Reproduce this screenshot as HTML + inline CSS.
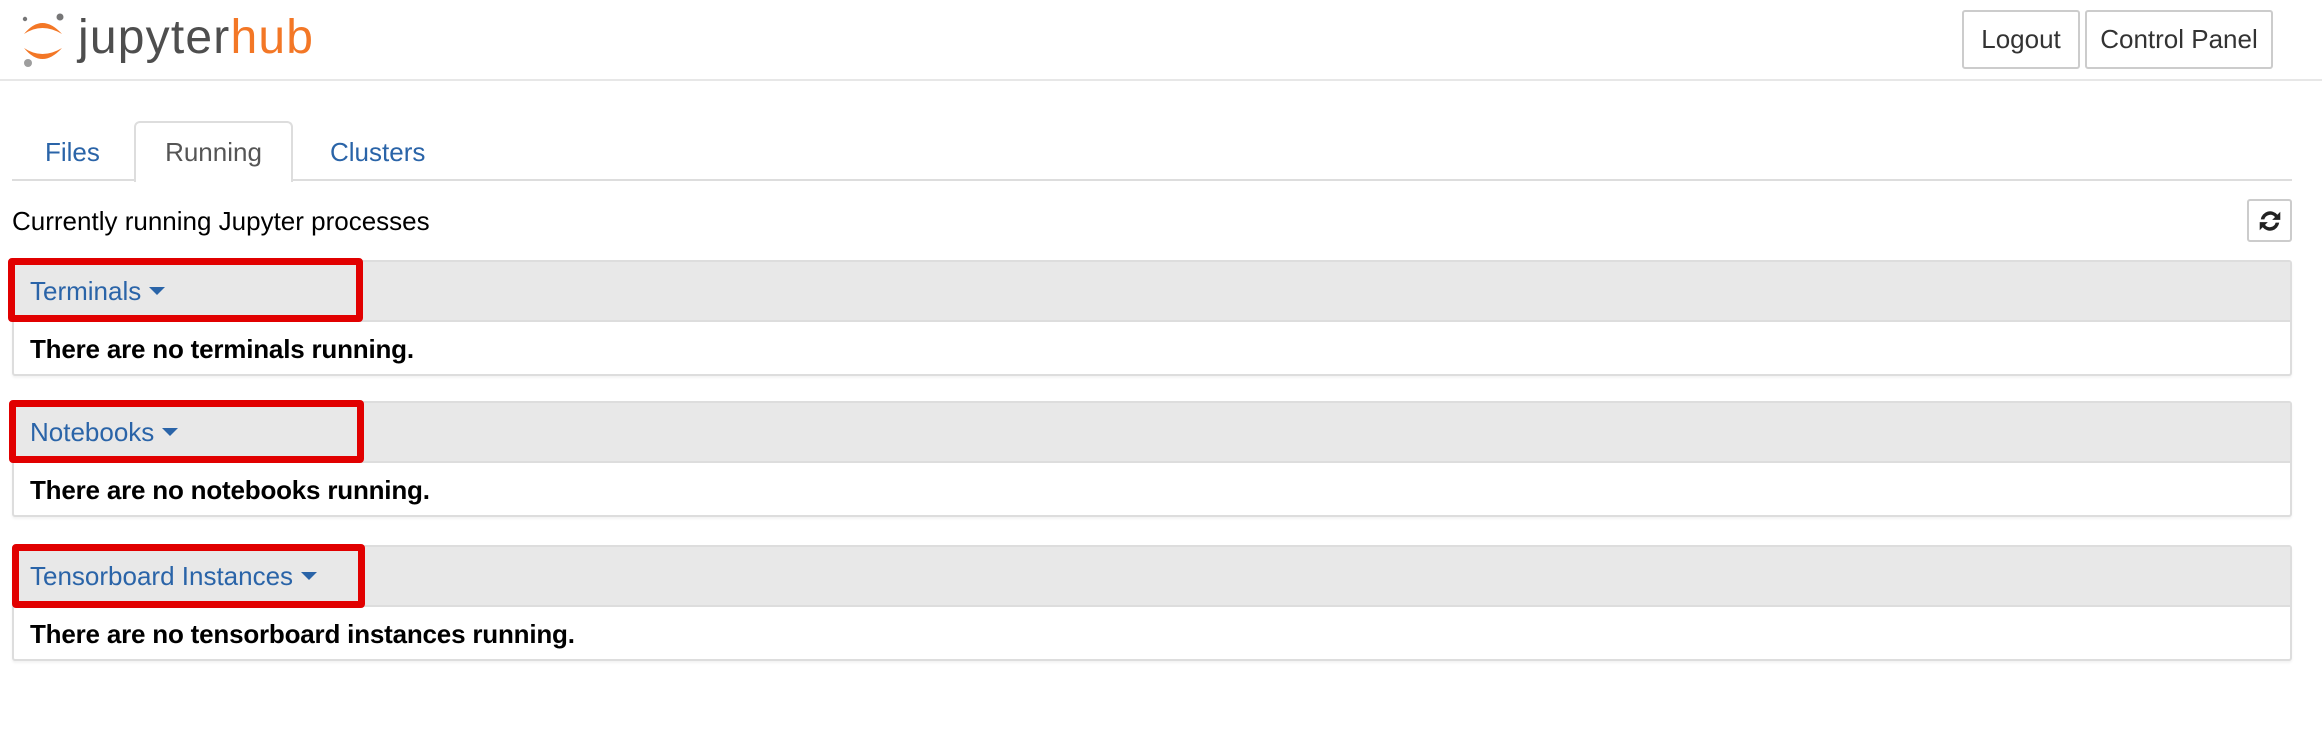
<!DOCTYPE html>
<html><head><meta charset="utf-8"><style>
*{box-sizing:border-box;margin:0;padding:0}
body{width:2322px;height:744px;background:#fff;font-family:"Liberation Sans",Arial,sans-serif;font-size:26px;color:#000;position:relative;overflow:hidden}
.abs{position:absolute}
.hline{position:absolute;left:0;width:2322px;top:79px;height:2px;background:#e7e7e7}
.btn{position:absolute;border:2px solid #ccc;border-radius:3px;background:#fff;color:#333;display:flex;align-items:center;justify-content:center;font-size:26px}
.tabline{position:absolute;left:12px;width:2280px;top:179px;height:2px;background:#ddd}
.tab{position:absolute;top:134px;color:#2a64a8;font-size:26px;line-height:36px}
.run{position:absolute;left:134px;top:121px;width:159px;height:61px;border:2px solid #ddd;border-bottom:none;border-radius:6px 6px 0 0;background:#fff;color:#555;display:flex;align-items:center;justify-content:center}
.panel{position:absolute;left:12px;width:2280px;border:2px solid #ddd;border-radius:3px;background:#fff;box-shadow:0 2px 2px rgba(0,0,0,.05)}
.ph{height:60px;background:#e8e8e8;border-bottom:2px solid #ddd;padding-left:16px;display:flex;align-items:center;color:#2a64a8}
.pb{height:52px;padding-left:16px;padding-top:2px;display:flex;align-items:center;font-weight:bold;letter-spacing:-0.2px}
.caret{display:inline-block;width:0;height:0;border-left:8px solid transparent;border-right:8px solid transparent;border-top:8px solid #2a64a8;margin-left:8px;vertical-align:middle}
.red{position:absolute;border:7px solid #e10000;border-radius:4px}
</style></head><body>
<svg class="abs" style="left:20px;top:10px" width="48" height="58" viewBox="0 0 48 58">
<path d="M4 24 Q22 2 42 24 Q22 12 4 24Z" fill="#f37726"/>
<path d="M4 38 Q22 60 42 38 Q22 50 4 38Z" fill="#f37726"/>
<circle cx="40" cy="7" r="3.5" fill="#767677"/>
<circle cx="5" cy="9" r="2.2" fill="#767677"/>
<circle cx="8" cy="53" r="4" fill="#9e9e9e"/>
</svg>
<div class="abs" style="left:78px;top:8px;font-size:48px;line-height:60px;letter-spacing:1.2px"><span style="color:#4e4e4e">jupyter</span><span style="color:#f37726">hub</span></div>
<div class="btn" style="left:1962px;top:10px;width:118px;height:59px">Logout</div>
<div class="btn" style="left:2085px;top:10px;width:188px;height:59px">Control Panel</div>
<div class="hline"></div>
<div class="tabline"></div>
<div class="tab" style="left:45px">Files</div>
<div class="run">Running</div>
<div class="tab" style="left:330px">Clusters</div>
<div class="abs" style="left:12px;top:206px;line-height:30px">Currently running Jupyter processes</div>
<div class="btn" style="left:2247px;top:199px;width:45px;height:43px;padding:0">
<svg width="26" height="26" viewBox="0 0 24 24"><path d="M3.5 10.5 A8.7 8.7 0 0 1 18.8 6.2 L21.5 3.5 V11 H14 L16.6 8.4 A5.6 5.6 0 0 0 6.8 10.5 Z" fill="#222"/><path d="M20.5 13.5 A8.7 8.7 0 0 1 5.2 17.8 L2.5 20.5 V13 H10 L7.4 15.6 A5.6 5.6 0 0 0 17.2 13.5 Z" fill="#222"/></svg></div>
<div class="panel" style="top:260px"><div class="ph">Terminals<span class="caret"></span></div><div class="pb">There are no terminals running.</div></div>
<div class="panel" style="top:401px"><div class="ph">Notebooks<span class="caret"></span></div><div class="pb">There are no notebooks running.</div></div>
<div class="panel" style="top:545px"><div class="ph">Tensorboard Instances<span class="caret"></span></div><div class="pb">There are no tensorboard instances running.</div></div>
<div class="red" style="left:8px;top:258px;width:355px;height:64px"></div>
<div class="red" style="left:9px;top:400px;width:355px;height:63px"></div>
<div class="red" style="left:12px;top:544px;width:353px;height:64px"></div>
</body></html>
